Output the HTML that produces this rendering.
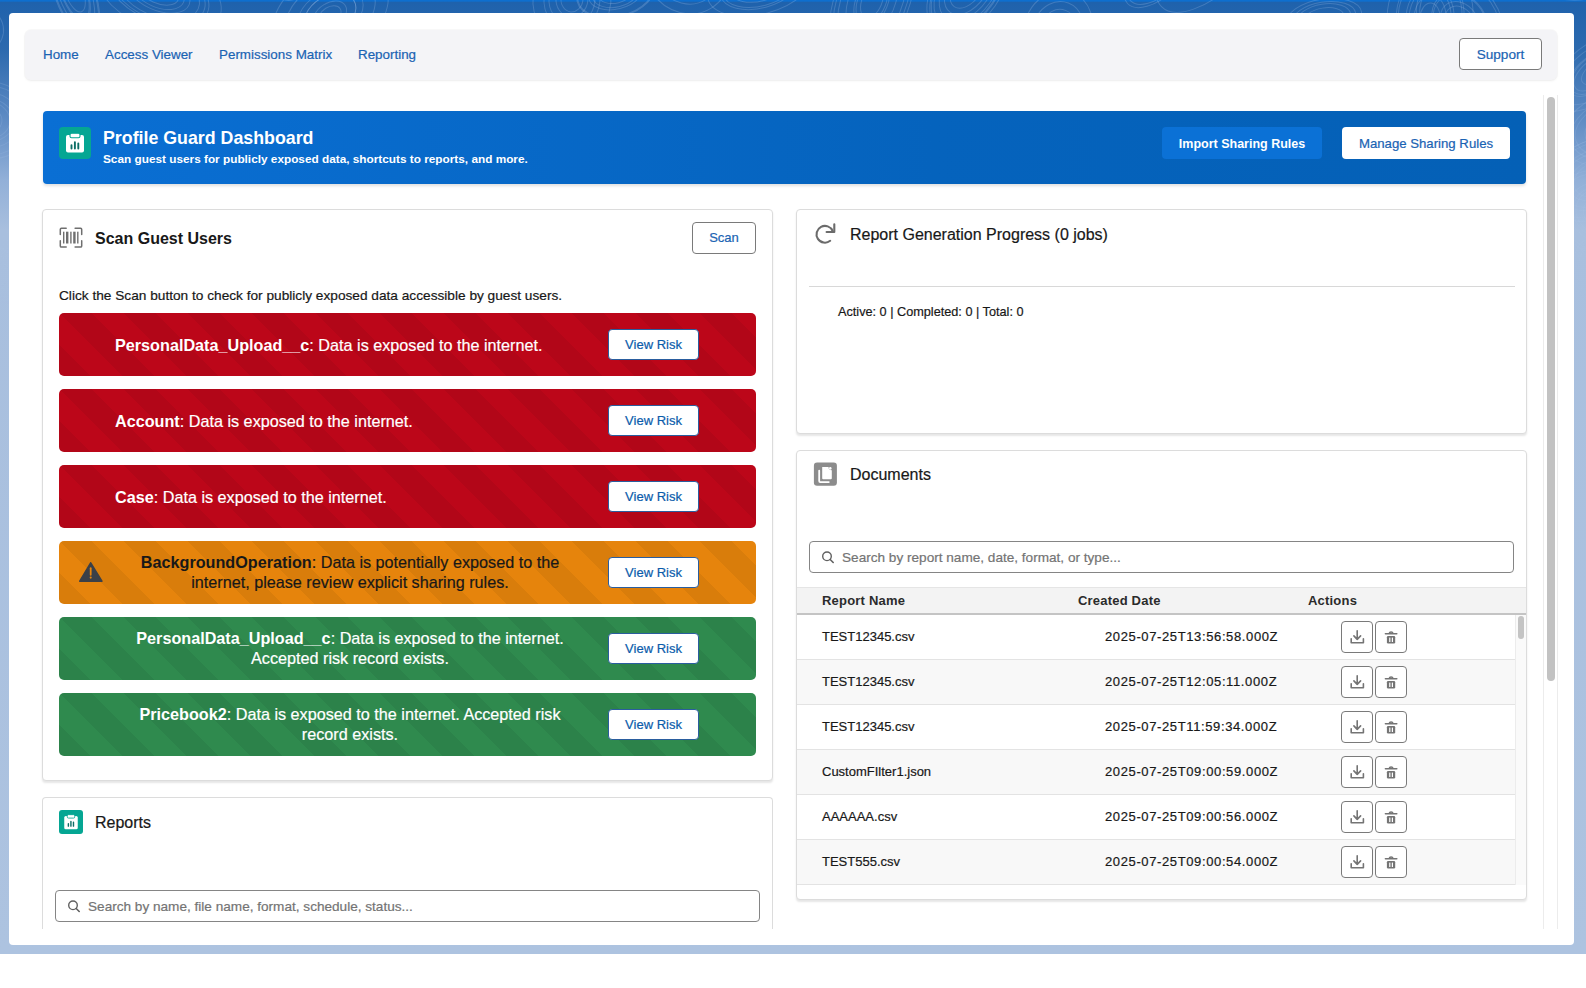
<!DOCTYPE html>
<html><head><meta charset="utf-8">
<style>
*{box-sizing:border-box;margin:0;padding:0}
html,body{width:1586px;height:988px;overflow:hidden;background:#fff;font-family:"Liberation Sans",sans-serif;color:#181818;-webkit-text-stroke:.2px currentColor}
b,.th,[style*="font-weight:bold"]{-webkit-text-stroke:0}
.abs{position:absolute}
#bg{position:absolute;left:0;top:0;width:1586px;height:954px;
 background:linear-gradient(180deg,#0e6fcf 0px,#0e6fcf 1px,#1f62ac 2.5px,#2d6aae 50px,#5f8cc4 120px,#92b0d8 180px,#a8bfde 230px,#adc3e0 954px)}
#panel{position:absolute;left:9px;top:13px;width:1565px;height:932px;background:#fff;border-radius:4px}
#nav{position:absolute;left:25px;top:30px;width:1532px;height:50px;background:#f4f4f7;border-radius:6px;box-shadow:0 0 0 1px rgba(0,0,0,.025),0 1px 3px rgba(0,0,0,.05)}
.navl{position:absolute;top:47px;font-size:13.4px;color:#1a63b3;line-height:15px;white-space:nowrap}
.btn{position:absolute;background:#fff;border:1px solid #7a7a7a;border-radius:4px;color:#1a63b3;font-size:13px;text-align:center;white-space:nowrap}
.card{position:absolute;background:#fff;border:1px solid #dcdcdc;border-radius:4px;box-shadow:0 2px 2px rgba(0,0,0,.1)}
.ttl{position:absolute;font-size:16px;line-height:19px;white-space:nowrap;color:#181818}
.txt{position:absolute;white-space:nowrap}
.alert{position:absolute;left:59px;width:697px;height:63px;border-radius:5px;
 background-image:linear-gradient(45deg,rgba(0,0,0,.055) 25%,transparent 25%,transparent 50%,rgba(0,0,0,.055) 50%,rgba(0,0,0,.055) 75%,transparent 75%,transparent);
 background-size:64px 64px}
.red{background-color:#bc0619}
.orange{background-color:#e6840c}
.green{background-color:#2f8a4e}
.at{position:absolute;font-size:16.2px;line-height:20px;white-space:nowrap;color:#fff}
.vr{position:absolute;left:549px;top:16px;width:91px;height:31px;background:#fff;border:1px solid #2a5d9e;border-radius:4px;color:#0b5cab;font-size:13px;line-height:29px;text-align:center}
.search{position:absolute;border:1px solid #858585;border-radius:4px;background:#fff}
.ph{position:absolute;font-size:13.6px;line-height:16px;color:#747474;white-space:nowrap}
.row{position:absolute;left:797px;width:718px;height:45px;border-bottom:1px solid #e3e3e3}
.cell{position:absolute;font-size:13px;line-height:15px;white-space:nowrap;color:#181818}
.date{letter-spacing:.62px}
.ib{position:absolute;width:32px;height:32px;border:1px solid #7a7a7a;border-radius:4px;background:#fff}
.ib svg{position:absolute;left:-1px;top:-1px}
.th{position:absolute;top:593px;letter-spacing:.2px;font-size:13px;line-height:15px;font-weight:bold;color:#2b2b2b;white-space:nowrap}
</style></head>
<body>
<svg width="0" height="0" style="position:absolute">
 <defs>
  <g id="dl" fill="none" stroke="#747474" stroke-width="1.6" stroke-linecap="round" stroke-linejoin="round">
   <path d="M16.2 9.7V18.4M12.9 14.9L16.2 18.4L19.6 14.9M10.2 17.7V21.7H22.4V17.7"/>
  </g>
  <g id="tr">
   <path d="M10.4 12.8H21.8" stroke="#747474" stroke-width="1.5" stroke-linecap="round"/>
   <path d="M14 12.6A2.2 2.2 0 0 1 18.2 12.6" fill="none" stroke="#747474" stroke-width="1.4"/>
   <rect x="11.9" y="15" width="8.3" height="7.5" rx="1.2" fill="#747474"/>
   <rect x="14.2" y="16.6" width="1.2" height="4.4" fill="#fff"/>
   <rect x="16.8" y="16.6" width="1.2" height="4.4" fill="#fff"/>
  </g>
  <g id="rpt">
   <rect x="0" y="0" width="32" height="32" rx="4" fill="#05a693"/>
   <rect x="7" y="8" width="18" height="17.6" rx="2" fill="#fff"/>
   <rect x="11" y="6.2" width="10" height="4.6" rx="1.6" fill="#fff" stroke="#05a693" stroke-width="1.1"/>
   <path d="M12.5 21.5V18.2M15.9 21.5V15.2M19.3 21.5V16.4" stroke="#0d6e66" stroke-width="1.9" stroke-linecap="round"/>
  </g>
 </defs>
</svg>
<div id="bg"></div>
<svg class="abs" style="left:0;top:0" width="1586" height="320" viewBox="0 0 1586 320"><defs><linearGradient id="fade" x1="0" y1="0" x2="0" y2="1"><stop offset="0" stop-color="#fff" stop-opacity="1"/><stop offset="1" stop-color="#fff" stop-opacity="0"/></linearGradient><mask id="m"><rect width="1586" height="320" fill="url(#fade)"/></mask></defs><g mask="url(#m)" fill="none" stroke="rgba(190,215,245,.22)" stroke-width="1"><ellipse cx="-42" cy="-5" rx="11" ry="8" transform="rotate(179 -42 -5)"/><ellipse cx="-42" cy="-5" rx="16" ry="11" transform="rotate(179 -42 -5)"/><ellipse cx="-42" cy="-5" rx="22" ry="15" transform="rotate(179 -42 -5)"/><ellipse cx="-42" cy="-5" rx="31" ry="21" transform="rotate(179 -42 -5)"/><ellipse cx="-42" cy="-5" rx="31" ry="21" transform="rotate(179 -42 -5)"/><ellipse cx="74" cy="-9" rx="22" ry="9" transform="rotate(70 74 -9)"/><ellipse cx="74" cy="-9" rx="30" ry="12" transform="rotate(70 74 -9)"/><ellipse cx="74" cy="-9" rx="32" ry="13" transform="rotate(70 74 -9)"/><ellipse cx="74" cy="-9" rx="42" ry="16" transform="rotate(70 74 -9)"/><ellipse cx="74" cy="-9" rx="52" ry="20" transform="rotate(70 74 -9)"/><ellipse cx="74" cy="-9" rx="50" ry="19" transform="rotate(70 74 -9)"/><ellipse cx="158" cy="-9" rx="22" ry="12" transform="rotate(24 158 -9)"/><ellipse cx="158" cy="-9" rx="28" ry="16" transform="rotate(24 158 -9)"/><ellipse cx="158" cy="-9" rx="34" ry="19" transform="rotate(24 158 -9)"/><ellipse cx="158" cy="-9" rx="44" ry="25" transform="rotate(24 158 -9)"/><ellipse cx="158" cy="-9" rx="54" ry="30" transform="rotate(24 158 -9)"/><ellipse cx="158" cy="-9" rx="50" ry="28" transform="rotate(24 158 -9)"/><ellipse cx="158" cy="-9" rx="67" ry="38" transform="rotate(24 158 -9)"/><ellipse cx="280" cy="-42" rx="20" ry="12" transform="rotate(70 280 -42)"/><ellipse cx="280" cy="-42" rx="25" ry="15" transform="rotate(70 280 -42)"/><ellipse cx="280" cy="-42" rx="31" ry="19" transform="rotate(70 280 -42)"/><ellipse cx="280" cy="-42" rx="41" ry="25" transform="rotate(70 280 -42)"/><ellipse cx="280" cy="-42" rx="44" ry="27" transform="rotate(70 280 -42)"/><ellipse cx="330" cy="15" rx="12" ry="8" transform="rotate(148 330 15)"/><ellipse cx="330" cy="15" rx="18" ry="12" transform="rotate(148 330 15)"/><ellipse cx="330" cy="15" rx="28" ry="19" transform="rotate(148 330 15)"/><ellipse cx="330" cy="15" rx="28" ry="19" transform="rotate(148 330 15)"/><ellipse cx="330" cy="15" rx="36" ry="24" transform="rotate(148 330 15)"/><ellipse cx="330" cy="15" rx="49" ry="33" transform="rotate(148 330 15)"/><ellipse cx="330" cy="15" rx="63" ry="43" transform="rotate(148 330 15)"/><ellipse cx="430" cy="29" rx="13" ry="6" transform="rotate(165 430 29)"/><ellipse cx="430" cy="29" rx="19" ry="9" transform="rotate(165 430 29)"/><ellipse cx="430" cy="29" rx="26" ry="12" transform="rotate(165 430 29)"/><ellipse cx="430" cy="29" rx="28" ry="13" transform="rotate(165 430 29)"/><ellipse cx="572" cy="-1" rx="13" ry="11" transform="rotate(96 572 -1)"/><ellipse cx="572" cy="-1" rx="18" ry="16" transform="rotate(96 572 -1)"/><ellipse cx="572" cy="-1" rx="26" ry="23" transform="rotate(96 572 -1)"/><ellipse cx="572" cy="-1" rx="32" ry="28" transform="rotate(96 572 -1)"/><ellipse cx="572" cy="-1" rx="45" ry="39" transform="rotate(96 572 -1)"/><ellipse cx="616" cy="-8" rx="18" ry="11" transform="rotate(166 616 -8)"/><ellipse cx="616" cy="-8" rx="24" ry="15" transform="rotate(166 616 -8)"/><ellipse cx="616" cy="-8" rx="28" ry="17" transform="rotate(166 616 -8)"/><ellipse cx="616" cy="-8" rx="40" ry="25" transform="rotate(166 616 -8)"/><ellipse cx="616" cy="-8" rx="39" ry="24" transform="rotate(166 616 -8)"/><ellipse cx="687" cy="-31" rx="20" ry="18" transform="rotate(57 687 -31)"/><ellipse cx="687" cy="-31" rx="28" ry="25" transform="rotate(57 687 -31)"/><ellipse cx="687" cy="-31" rx="36" ry="33" transform="rotate(57 687 -31)"/><ellipse cx="687" cy="-31" rx="46" ry="42" transform="rotate(57 687 -31)"/><ellipse cx="760" cy="-15" rx="21" ry="12" transform="rotate(165 760 -15)"/><ellipse cx="760" cy="-15" rx="30" ry="16" transform="rotate(165 760 -15)"/><ellipse cx="760" cy="-15" rx="38" ry="21" transform="rotate(165 760 -15)"/><ellipse cx="760" cy="-15" rx="41" ry="23" transform="rotate(165 760 -15)"/><ellipse cx="760" cy="-15" rx="54" ry="29" transform="rotate(165 760 -15)"/><ellipse cx="872" cy="1" rx="18" ry="10" transform="rotate(112 872 1)"/><ellipse cx="872" cy="1" rx="25" ry="14" transform="rotate(112 872 1)"/><ellipse cx="872" cy="1" rx="28" ry="16" transform="rotate(112 872 1)"/><ellipse cx="872" cy="1" rx="40" ry="23" transform="rotate(112 872 1)"/><ellipse cx="872" cy="1" rx="54" ry="30" transform="rotate(112 872 1)"/><ellipse cx="872" cy="1" rx="60" ry="34" transform="rotate(112 872 1)"/><ellipse cx="872" cy="1" rx="65" ry="37" transform="rotate(112 872 1)"/><ellipse cx="968" cy="-13" rx="24" ry="14" transform="rotate(125 968 -13)"/><ellipse cx="968" cy="-13" rx="31" ry="19" transform="rotate(125 968 -13)"/><ellipse cx="968" cy="-13" rx="38" ry="23" transform="rotate(125 968 -13)"/><ellipse cx="968" cy="-13" rx="45" ry="27" transform="rotate(125 968 -13)"/><ellipse cx="968" cy="-13" rx="49" ry="29" transform="rotate(125 968 -13)"/><ellipse cx="968" cy="-13" rx="51" ry="30" transform="rotate(125 968 -13)"/><ellipse cx="968" cy="-13" rx="54" ry="33" transform="rotate(125 968 -13)"/><ellipse cx="1058" cy="30" rx="16" ry="14" transform="rotate(111 1058 30)"/><ellipse cx="1058" cy="30" rx="21" ry="18" transform="rotate(111 1058 30)"/><ellipse cx="1058" cy="30" rx="29" ry="25" transform="rotate(111 1058 30)"/><ellipse cx="1058" cy="30" rx="40" ry="34" transform="rotate(111 1058 30)"/><ellipse cx="1157" cy="-25" rx="17" ry="9" transform="rotate(136 1157 -25)"/><ellipse cx="1157" cy="-25" rx="24" ry="13" transform="rotate(136 1157 -25)"/><ellipse cx="1157" cy="-25" rx="29" ry="15" transform="rotate(136 1157 -25)"/><ellipse cx="1157" cy="-25" rx="37" ry="20" transform="rotate(136 1157 -25)"/><ellipse cx="1157" cy="-25" rx="41" ry="22" transform="rotate(136 1157 -25)"/><ellipse cx="1214" cy="-44" rx="22" ry="10" transform="rotate(136 1214 -44)"/><ellipse cx="1214" cy="-44" rx="28" ry="13" transform="rotate(136 1214 -44)"/><ellipse cx="1214" cy="-44" rx="39" ry="18" transform="rotate(136 1214 -44)"/><ellipse cx="1214" cy="-44" rx="39" ry="18" transform="rotate(136 1214 -44)"/><ellipse cx="1214" cy="-44" rx="44" ry="20" transform="rotate(136 1214 -44)"/><ellipse cx="1214" cy="-44" rx="54" ry="25" transform="rotate(136 1214 -44)"/><ellipse cx="1214" cy="-44" rx="73" ry="34" transform="rotate(136 1214 -44)"/><ellipse cx="1324" cy="18" rx="20" ry="10" transform="rotate(171 1324 18)"/><ellipse cx="1324" cy="18" rx="27" ry="14" transform="rotate(171 1324 18)"/><ellipse cx="1324" cy="18" rx="32" ry="16" transform="rotate(171 1324 18)"/><ellipse cx="1324" cy="18" rx="38" ry="19" transform="rotate(171 1324 18)"/><ellipse cx="1430" cy="18" rx="15" ry="10" transform="rotate(94 1430 18)"/><ellipse cx="1430" cy="18" rx="23" ry="16" transform="rotate(94 1430 18)"/><ellipse cx="1430" cy="18" rx="30" ry="21" transform="rotate(94 1430 18)"/><ellipse cx="1430" cy="18" rx="33" ry="24" transform="rotate(94 1430 18)"/><ellipse cx="1430" cy="18" rx="48" ry="34" transform="rotate(94 1430 18)"/><ellipse cx="1430" cy="18" rx="45" ry="32" transform="rotate(94 1430 18)"/><ellipse cx="1430" cy="18" rx="59" ry="43" transform="rotate(94 1430 18)"/><ellipse cx="1460" cy="23" rx="18" ry="14" transform="rotate(56 1460 23)"/><ellipse cx="1460" cy="23" rx="23" ry="18" transform="rotate(56 1460 23)"/><ellipse cx="1460" cy="23" rx="31" ry="25" transform="rotate(56 1460 23)"/><ellipse cx="1460" cy="23" rx="33" ry="26" transform="rotate(56 1460 23)"/><ellipse cx="1460" cy="23" rx="51" ry="40" transform="rotate(56 1460 23)"/><ellipse cx="1460" cy="23" rx="47" ry="37" transform="rotate(56 1460 23)"/><ellipse cx="1579" cy="-18" rx="22" ry="9" transform="rotate(177 1579 -18)"/><ellipse cx="1579" cy="-18" rx="29" ry="12" transform="rotate(177 1579 -18)"/><ellipse cx="1579" cy="-18" rx="37" ry="15" transform="rotate(177 1579 -18)"/><ellipse cx="1579" cy="-18" rx="41" ry="17" transform="rotate(177 1579 -18)"/><ellipse cx="1579" cy="-18" rx="43" ry="18" transform="rotate(177 1579 -18)"/><ellipse cx="1629" cy="12" rx="11" ry="5" transform="rotate(86 1629 12)"/><ellipse cx="1629" cy="12" rx="18" ry="8" transform="rotate(86 1629 12)"/><ellipse cx="1629" cy="12" rx="27" ry="12" transform="rotate(86 1629 12)"/><ellipse cx="1629" cy="12" rx="29" ry="13" transform="rotate(86 1629 12)"/><ellipse cx="1629" cy="12" rx="36" ry="16" transform="rotate(86 1629 12)"/><ellipse cx="-46" cy="35" rx="17" ry="11" transform="rotate(170 -46 35)"/><ellipse cx="-46" cy="35" rx="23" ry="14" transform="rotate(170 -46 35)"/><ellipse cx="-46" cy="35" rx="34" ry="21" transform="rotate(170 -46 35)"/><ellipse cx="-46" cy="35" rx="41" ry="25" transform="rotate(170 -46 35)"/><ellipse cx="-46" cy="35" rx="41" ry="25" transform="rotate(170 -46 35)"/><ellipse cx="-46" cy="35" rx="50" ry="32" transform="rotate(170 -46 35)"/><ellipse cx="1634" cy="48" rx="10" ry="7" transform="rotate(82 1634 48)"/><ellipse cx="1634" cy="48" rx="17" ry="12" transform="rotate(82 1634 48)"/><ellipse cx="1634" cy="48" rx="25" ry="17" transform="rotate(82 1634 48)"/><ellipse cx="1634" cy="48" rx="36" ry="25" transform="rotate(82 1634 48)"/><ellipse cx="1634" cy="48" rx="43" ry="30" transform="rotate(82 1634 48)"/><ellipse cx="1634" cy="48" rx="54" ry="38" transform="rotate(82 1634 48)"/><ellipse cx="1634" cy="48" rx="51" ry="36" transform="rotate(82 1634 48)"/><ellipse cx="-45" cy="77" rx="10" ry="8" transform="rotate(156 -45 77)"/><ellipse cx="-45" cy="77" rx="15" ry="12" transform="rotate(156 -45 77)"/><ellipse cx="-45" cy="77" rx="22" ry="17" transform="rotate(156 -45 77)"/><ellipse cx="-45" cy="77" rx="29" ry="23" transform="rotate(156 -45 77)"/><ellipse cx="-45" cy="77" rx="31" ry="25" transform="rotate(156 -45 77)"/><ellipse cx="1596" cy="72" rx="17" ry="9" transform="rotate(142 1596 72)"/><ellipse cx="1596" cy="72" rx="26" ry="13" transform="rotate(142 1596 72)"/><ellipse cx="1596" cy="72" rx="30" ry="16" transform="rotate(142 1596 72)"/><ellipse cx="1596" cy="72" rx="33" ry="17" transform="rotate(142 1596 72)"/><ellipse cx="1596" cy="72" rx="44" ry="23" transform="rotate(142 1596 72)"/><ellipse cx="1596" cy="72" rx="53" ry="28" transform="rotate(142 1596 72)"/><ellipse cx="-14" cy="120" rx="16" ry="13" transform="rotate(5 -14 120)"/><ellipse cx="-14" cy="120" rx="24" ry="19" transform="rotate(5 -14 120)"/><ellipse cx="-14" cy="120" rx="28" ry="22" transform="rotate(5 -14 120)"/><ellipse cx="-14" cy="120" rx="35" ry="28" transform="rotate(5 -14 120)"/><ellipse cx="-14" cy="120" rx="49" ry="39" transform="rotate(5 -14 120)"/><ellipse cx="-14" cy="120" rx="44" ry="35" transform="rotate(5 -14 120)"/><ellipse cx="1616" cy="128" rx="25" ry="16" transform="rotate(162 1616 128)"/><ellipse cx="1616" cy="128" rx="32" ry="20" transform="rotate(162 1616 128)"/><ellipse cx="1616" cy="128" rx="42" ry="27" transform="rotate(162 1616 128)"/><ellipse cx="1616" cy="128" rx="47" ry="30" transform="rotate(162 1616 128)"/><ellipse cx="1616" cy="128" rx="56" ry="36" transform="rotate(162 1616 128)"/><ellipse cx="-41" cy="182" rx="15" ry="12" transform="rotate(101 -41 182)"/><ellipse cx="-41" cy="182" rx="21" ry="17" transform="rotate(101 -41 182)"/><ellipse cx="-41" cy="182" rx="30" ry="24" transform="rotate(101 -41 182)"/><ellipse cx="-41" cy="182" rx="41" ry="33" transform="rotate(101 -41 182)"/><ellipse cx="-41" cy="182" rx="40" ry="32" transform="rotate(101 -41 182)"/><ellipse cx="1597" cy="179" rx="24" ry="17" transform="rotate(157 1597 179)"/><ellipse cx="1597" cy="179" rx="30" ry="20" transform="rotate(157 1597 179)"/><ellipse cx="1597" cy="179" rx="39" ry="26" transform="rotate(157 1597 179)"/><ellipse cx="1597" cy="179" rx="43" ry="29" transform="rotate(157 1597 179)"/><ellipse cx="1597" cy="179" rx="52" ry="36" transform="rotate(157 1597 179)"/><ellipse cx="1597" cy="179" rx="57" ry="39" transform="rotate(157 1597 179)"/><ellipse cx="1597" cy="179" rx="57" ry="39" transform="rotate(157 1597 179)"/><ellipse cx="-45" cy="218" rx="18" ry="16" transform="rotate(5 -45 218)"/><ellipse cx="-45" cy="218" rx="25" ry="22" transform="rotate(5 -45 218)"/><ellipse cx="-45" cy="218" rx="35" ry="31" transform="rotate(5 -45 218)"/><ellipse cx="-45" cy="218" rx="40" ry="35" transform="rotate(5 -45 218)"/><ellipse cx="1601" cy="213" rx="10" ry="8" transform="rotate(30 1601 213)"/><ellipse cx="1601" cy="213" rx="18" ry="16" transform="rotate(30 1601 213)"/><ellipse cx="1601" cy="213" rx="26" ry="22" transform="rotate(30 1601 213)"/><ellipse cx="1601" cy="213" rx="29" ry="25" transform="rotate(30 1601 213)"/><ellipse cx="1601" cy="213" rx="34" ry="29" transform="rotate(30 1601 213)"/><ellipse cx="1601" cy="213" rx="44" ry="38" transform="rotate(30 1601 213)"/><ellipse cx="1601" cy="213" rx="48" ry="41" transform="rotate(30 1601 213)"/><ellipse cx="-6" cy="274" rx="17" ry="10" transform="rotate(20 -6 274)"/><ellipse cx="-6" cy="274" rx="23" ry="13" transform="rotate(20 -6 274)"/><ellipse cx="-6" cy="274" rx="33" ry="19" transform="rotate(20 -6 274)"/><ellipse cx="-6" cy="274" rx="44" ry="25" transform="rotate(20 -6 274)"/><ellipse cx="-6" cy="274" rx="37" ry="22" transform="rotate(20 -6 274)"/><ellipse cx="-6" cy="274" rx="45" ry="26" transform="rotate(20 -6 274)"/><ellipse cx="-6" cy="274" rx="47" ry="27" transform="rotate(20 -6 274)"/><ellipse cx="1605" cy="277" rx="13" ry="9" transform="rotate(64 1605 277)"/><ellipse cx="1605" cy="277" rx="21" ry="15" transform="rotate(64 1605 277)"/><ellipse cx="1605" cy="277" rx="24" ry="17" transform="rotate(64 1605 277)"/><ellipse cx="1605" cy="277" rx="35" ry="24" transform="rotate(64 1605 277)"/><ellipse cx="1605" cy="277" rx="37" ry="26" transform="rotate(64 1605 277)"/><ellipse cx="1605" cy="277" rx="42" ry="29" transform="rotate(64 1605 277)"/></g></svg>
<div id="panel"></div>
<div id="nav"></div>
<div class="navl" style="left:43px">Home</div>
<div class="navl" style="left:105px">Access Viewer</div>
<div class="navl" style="left:219px">Permissions Matrix</div>
<div class="navl" style="left:358px">Reporting</div>
<div class="btn" style="left:1459px;top:38px;width:83px;height:32px;line-height:32px;font-size:13.6px">Support</div>

<!-- scrollbar -->
<div class="abs" style="left:1543px;top:95px;width:15px;height:834px;border-left:1px solid #ececec;border-right:1px solid #ececec"></div>
<div class="abs" style="left:1547px;top:97px;width:8px;height:584px;border-radius:4px;background:#c2c2c2"></div>

<!-- banner -->
<div id="banner" class="abs" style="left:43px;top:111px;width:1483px;height:73px;border-radius:4px;background:linear-gradient(90deg,#0a6fd4,#0563bd 60%,#0460b6);box-shadow:0 2px 3px rgba(0,0,0,.12)"></div>
<svg class="abs" style="left:59px;top:127px" width="32" height="32" viewBox="0 0 32 32"><use href="#rpt"/></svg>
<div class="txt" style="left:103px;top:128px;font-size:17.8px;line-height:21px;font-weight:bold;color:#fff">Profile Guard Dashboard</div>
<div class="txt" style="left:103px;top:152px;font-size:11.8px;line-height:14px;font-weight:bold;color:#fff">Scan guest users for publicly exposed data, shortcuts to reports, and more.</div>
<div class="abs" style="left:1162px;top:127px;width:160px;height:32px;border-radius:4px;background:#0b71d6;color:#fff;font-weight:bold;font-size:12.5px;line-height:34px;text-align:center">Import Sharing Rules</div>
<div class="abs" style="left:1342px;top:127px;width:168px;height:32px;border-radius:4px;background:#fff;color:#1a63b3;font-size:13.2px;line-height:34px;text-align:center">Manage Sharing Rules</div>

<!-- left card 1 -->
<div class="card" style="left:42px;top:209px;width:731px;height:572px"></div>
<svg class="abs" style="left:55px;top:222px" width="32" height="32" viewBox="0 0 32 32">
 <g fill="none" stroke="#6f6f6f" stroke-width="1.5" stroke-linecap="round" stroke-linejoin="round">
  <path d="M11.2 6.3H6.4Q5.3 6.3 5.3 7.4V12.6M20.1 6.3H25.6Q26.7 6.3 26.7 7.4V12.6M5.3 18.8V24Q5.3 25.1 6.4 25.1H11.2M26.7 18.8V24Q26.7 25.1 25.6 25.1H20.1"/>
 </g>
 <g fill="#6f6f6f">
  <rect x="8" y="9.7" width="1.4" height="11.8"/><rect x="11" y="9.7" width="2.4" height="11.8"/><rect x="15.2" y="9.7" width="1.4" height="11.8"/><rect x="18.2" y="9.7" width="2.4" height="11.8"/><rect x="22.1" y="9.7" width="1.4" height="11.8"/>
 </g>
</svg>
<div class="ttl" style="left:95px;top:229px;font-weight:bold">Scan Guest Users</div>
<div class="btn" style="left:692px;top:222px;width:64px;height:32px;line-height:30px">Scan</div>
<div class="txt" style="left:59px;top:288px;font-size:13.68px;line-height:15px">Click the Scan button to check for publicly exposed data accessible by guest users.</div>

<div class="alert red" style="top:313px"><div class="at" style="left:56px;top:22px"><b>PersonalData_Upload__c</b>: Data is exposed to the internet.</div><div class="vr">View Risk</div></div>
<div class="alert red" style="top:389px"><div class="at" style="left:56px;top:22px"><b>Account</b>: Data is exposed to the internet.</div><div class="vr">View Risk</div></div>
<div class="alert red" style="top:465px"><div class="at" style="left:56px;top:22px"><b>Case</b>: Data is exposed to the internet.</div><div class="vr">View Risk</div></div>
<div class="alert orange" style="top:541px">
 <svg class="abs" style="left:15px;top:15px" width="32" height="32" viewBox="0 0 32 32"><path d="M16.7 6.8L5.8 25.2H27.9Z" fill="#3b4048" stroke="#3b4048" stroke-width="1.6" stroke-linejoin="round"/><path d="M16.7 12.2V18.8" stroke="#e6840c" stroke-width="1.8" stroke-linecap="round"/><circle cx="16.7" cy="21.6" r="1.05" fill="#e6840c"/></svg>
 <div class="at" style="left:76px;top:11px;width:430px;text-align:center;color:#181818"><b>BackgroundOperation</b>: Data is potentially exposed to the<br>internet, please review explicit sharing rules.</div><div class="vr">View Risk</div></div>
<div class="alert green" style="top:617px">
 <div class="at" style="left:76px;top:11px;width:430px;text-align:center"><b>PersonalData_Upload__c</b>: Data is exposed to the internet.<br>Accepted risk record exists.</div><div class="vr">View Risk</div></div>
<div class="alert green" style="top:693px">
 <div class="at" style="left:76px;top:11px;width:430px;text-align:center"><b>Pricebook2</b>: Data is exposed to the internet. Accepted risk<br>record exists.</div><div class="vr">View Risk</div></div>

<!-- left card 2 -->
<div class="card" style="left:42px;top:797px;width:731px;height:132px;border-bottom:none;border-bottom-left-radius:0;border-bottom-right-radius:0;box-shadow:none"></div>
<svg class="abs" style="left:59px;top:810px" width="24" height="24" viewBox="0 0 32 32"><use href="#rpt"/></svg>
<div class="ttl" style="left:95px;top:813px">Reports</div>
<div class="search" style="left:55px;top:890px;width:705px;height:32px"></div>
<svg class="abs" style="left:64px;top:896px" width="20" height="20" viewBox="0 0 20 20"><circle cx="9" cy="9.3" r="4.3" fill="none" stroke="#606060" stroke-width="1.4"/><path d="M12.2 12.5L15.2 15.5" stroke="#606060" stroke-width="1.6" stroke-linecap="round"/></svg>
<div class="ph" style="left:88px;top:899px">Search by name, file name, format, schedule, status...</div>

<!-- right card 1 -->
<div class="card" style="left:796px;top:209px;width:731px;height:225px"></div>
<svg class="abs" style="left:810px;top:218px" width="32" height="32" viewBox="0 0 32 32"><g fill="none" stroke="#6b6b6b" stroke-width="2.1" stroke-linecap="round" stroke-linejoin="round"><path d="M20.2 22.8A8.4 8.4 0 1 1 22.7 13.1"/><path d="M24.3 6.3V14H16.6"/></g></svg>
<div class="ttl" style="left:850px;top:225px">Report Generation Progress (0 jobs)</div>
<div class="abs" style="left:809px;top:286px;width:706px;height:1px;background:#d8d8d8"></div>
<div class="txt" style="left:838px;top:305px;font-size:12.7px;line-height:15px">Active: 0 | Completed: 0 | Total: 0</div>

<!-- right card 2 -->
<div class="card" style="left:796px;top:450px;width:731px;height:450px"></div>
<svg class="abs" style="left:809px;top:458px" width="32" height="32" viewBox="0 0 32 32">
 <rect x="4.9" y="4.6" width="23" height="23.2" rx="3.2" fill="#8c8c8c"/>
 <path d="M10.2 12.6V23.1Q10.2 24.1 11.2 24.1H19.8" fill="none" stroke="#fff" stroke-width="1.8" stroke-linecap="round"/>
 <path d="M13.2 8.9H19.6Q19.4 12 22.8 12.3V20.3Q22.8 21.2 21.9 21.2H14.1Q13.2 21.2 13.2 20.3Z" fill="#fff"/>
 <circle cx="21.3" cy="10.4" r="1.3" fill="#fff"/>
</svg>
<div class="ttl" style="left:850px;top:465px">Documents</div>
<div class="search" style="left:809px;top:541px;width:705px;height:32px"></div>
<svg class="abs" style="left:818px;top:547px" width="20" height="20" viewBox="0 0 20 20"><circle cx="9" cy="9.3" r="4.3" fill="none" stroke="#606060" stroke-width="1.4"/><path d="M12.2 12.5L15.2 15.5" stroke="#606060" stroke-width="1.6" stroke-linecap="round"/></svg>
<div class="ph" style="left:842px;top:550px">Search by report name, date, format, or type...</div>

<!-- table -->
<div class="abs" style="left:797px;top:587px;width:729px;height:28px;background:#f3f3f3;border-top:1px solid #e5e5e5;border-bottom:2px solid #c4c4c4"></div>
<div class="th" style="left:822px">Report Name</div>
<div class="th" style="left:1078px">Created Date</div>
<div class="th" style="left:1308px">Actions</div>
<div class="row" style="top:615px;background:#fff"></div>
<div class="cell" style="left:822px;top:629px">TEST12345.csv</div>
<div class="cell date" style="left:1105px;top:629px">2025-07-25T13:56:58.000Z</div>
<div class="ib" style="left:1341px;top:621px"><svg width="32" height="32" viewBox="0 0 32 32"><use href="#dl"/></svg></div>
<div class="ib" style="left:1375px;top:621px"><svg width="32" height="32" viewBox="0 0 32 32"><use href="#tr"/></svg></div>
<div class="row" style="top:660px;background:#f8f8f8"></div>
<div class="cell" style="left:822px;top:674px">TEST12345.csv</div>
<div class="cell date" style="left:1105px;top:674px">2025-07-25T12:05:11.000Z</div>
<div class="ib" style="left:1341px;top:666px"><svg width="32" height="32" viewBox="0 0 32 32"><use href="#dl"/></svg></div>
<div class="ib" style="left:1375px;top:666px"><svg width="32" height="32" viewBox="0 0 32 32"><use href="#tr"/></svg></div>
<div class="row" style="top:705px;background:#fff"></div>
<div class="cell" style="left:822px;top:719px">TEST12345.csv</div>
<div class="cell date" style="left:1105px;top:719px">2025-07-25T11:59:34.000Z</div>
<div class="ib" style="left:1341px;top:711px"><svg width="32" height="32" viewBox="0 0 32 32"><use href="#dl"/></svg></div>
<div class="ib" style="left:1375px;top:711px"><svg width="32" height="32" viewBox="0 0 32 32"><use href="#tr"/></svg></div>
<div class="row" style="top:750px;background:#f8f8f8"></div>
<div class="cell" style="left:822px;top:764px">CustomFIlter1.json</div>
<div class="cell date" style="left:1105px;top:764px">2025-07-25T09:00:59.000Z</div>
<div class="ib" style="left:1341px;top:756px"><svg width="32" height="32" viewBox="0 0 32 32"><use href="#dl"/></svg></div>
<div class="ib" style="left:1375px;top:756px"><svg width="32" height="32" viewBox="0 0 32 32"><use href="#tr"/></svg></div>
<div class="row" style="top:795px;background:#fff"></div>
<div class="cell" style="left:822px;top:809px">AAAAAA.csv</div>
<div class="cell date" style="left:1105px;top:809px">2025-07-25T09:00:56.000Z</div>
<div class="ib" style="left:1341px;top:801px"><svg width="32" height="32" viewBox="0 0 32 32"><use href="#dl"/></svg></div>
<div class="ib" style="left:1375px;top:801px"><svg width="32" height="32" viewBox="0 0 32 32"><use href="#tr"/></svg></div>
<div class="row" style="top:840px;background:#f8f8f8"></div>
<div class="cell" style="left:822px;top:854px">TEST555.csv</div>
<div class="cell date" style="left:1105px;top:854px">2025-07-25T09:00:54.000Z</div>
<div class="ib" style="left:1341px;top:846px"><svg width="32" height="32" viewBox="0 0 32 32"><use href="#dl"/></svg></div>
<div class="ib" style="left:1375px;top:846px"><svg width="32" height="32" viewBox="0 0 32 32"><use href="#tr"/></svg></div>
<div class="abs" style="left:1515px;top:615px;width:11px;height:270px;border-left:1px solid #ececec;background:#fafafa"></div>
<div class="abs" style="left:1518px;top:616px;width:6px;height:23px;border-radius:3px;background:#c4c4c4"></div>

</body></html>
